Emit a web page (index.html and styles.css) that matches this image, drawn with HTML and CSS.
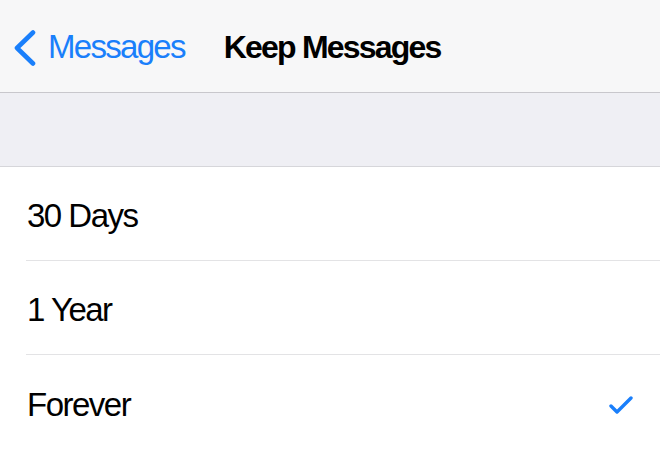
FILE: index.html
```html
<!DOCTYPE html>
<html lang="en">
<head>
    <meta charset="UTF-8">
    <meta name="viewport" content="width=device-width, initial-scale=1.0">
    <title>Keep Messages</title>
    <link rel="stylesheet" href="styles.css">
</head>
<body>

    <!-- Navigeringsf칛lt -->
    <div class="nav-bar">
        <div class="back-link">
            <svg class="chevron" width="24" height="36" viewBox="0 0 24 36">
                <polyline points="20,2.5 4,18 20,33.5" fill="none" stroke="#1a7ffb" stroke-width="4.6" stroke-linecap="round" stroke-linejoin="round"/>
            </svg>
            <span class="back-text">Messages</span>
        </div>
        <div class="nav-title">Keep Messages</div>
    </div>

    <div class="group-spacer"></div>

    <div class="option-list">
        <div class="option-row">
            <div class="option-inner">
                <span class="option-text">30 Days</span>
            </div>
        </div>
        <div class="option-row">
            <div class="option-inner">
                <span class="option-text">1 Year</span>
            </div>
        </div>
        <div class="option-row last">
            <div class="option-inner">
                <span class="option-text">Forever</span>
                <svg class="checkmark" width="24" height="20" viewBox="0 0 24 20">
                    <polyline points="2,11 8,17 22,3" fill="none" stroke="#1a7ffb" stroke-width="3.4" stroke-linecap="round" stroke-linejoin="round"/>
                </svg>
            </div>
        </div>
    </div>

</body>
</html>
```

FILE: styles.css
```css
body {
    font-family: 'Liberation Sans', Arial, sans-serif;
    margin: 0;
    padding: 0;
    width: 660px;
    height: 450px;
    overflow: hidden;
    background-color: #ffffff;
    color: #000000;
}

.nav-bar {
    height: 92px;
    display: flex;
    flex-direction: row;
    align-items: center;
    background-color: #f7f7f8;
    border-bottom: 1px solid #c8c7cc;
    padding-left: 13px;
}

.back-link {
    display: flex;
    flex-direction: row;
    align-items: center;
    gap: 11px;
}

.chevron {
    display: block;
    margin-top: 4px;
}

.back-text {
    color: #1a7ffb;
    font-size: 33px;
    letter-spacing: -1.7px;
    margin-top: 2px;
}

.nav-title {
    margin-left: 39px;
    font-size: 32px;
    font-weight: bold;
    letter-spacing: -1.8px;
    margin-top: 2px;
}

.group-spacer {
    height: 73px;
    background-color: #efeff4;
    border-bottom: 1px solid #d6d6da;
}

.option-list {
    display: flex;
    flex-direction: column;
}

.option-row {
    padding-left: 26px;
}

.option-inner {
    height: 93px;
    display: flex;
    flex-direction: row;
    align-items: center;
    justify-content: space-between;
    border-bottom: 1px solid #e3e3e5;
    padding-left: 1px;
    padding-right: 27px;
}

.option-row.last .option-inner {
    border-bottom: none;
    height: 95px;
}

.option-text {
    font-size: 33px;
    letter-spacing: -1.5px;
    margin-top: 4px;
}

.checkmark {
    display: block;
    margin-top: 4px;
}
```
